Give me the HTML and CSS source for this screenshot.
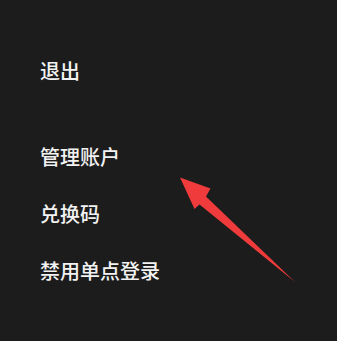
FILE: index.html
```
<!DOCTYPE html>
<html lang="zh-CN">
<head>
<meta charset="utf-8">
<title>菜单</title>
<link rel="stylesheet" href="styles.css">
</head>
<body>
<div class="panel">
  <ul class="menu">
    <li class="item item-logout">退出</li>
    <li class="item">管理账户</li>
    <li class="item">兑换码</li>
    <li class="item">禁用单点登录</li>
  </ul>
  <svg class="arrow" width="337" height="341" viewBox="0 0 337 341" aria-hidden="true">
    <polygon points="180,177.5 210.5,188.5 206,196.5 295,282 199.5,204.5 194.5,209" fill="#ef3b3b"/>
  </svg>
</div>
</body>
</html>
```
FILE: styles.css
```
html, body {
  margin: 0;
  padding: 0;
  background: #1c1c1c;
}
.panel {
  position: relative;
  width: 337px;
  height: 341px;
  overflow: hidden;
  background: #1c1c1c;
}
.menu {
  list-style: none;
  margin: 0;
  padding: 57px 0 0 40px;
  display: flex;
  flex-direction: column;
  gap: 29px;
}
.item {
  font-family: "Noto Sans CJK SC", "Noto Sans", sans-serif;
  font-size: 20px;
  font-weight: 500;
  line-height: 28px;
  color: #f2f2f2;
  white-space: nowrap;
}
.item-logout {
  margin-bottom: 29px;
}
.arrow {
  position: absolute;
  left: 0;
  top: 0;
}
```
